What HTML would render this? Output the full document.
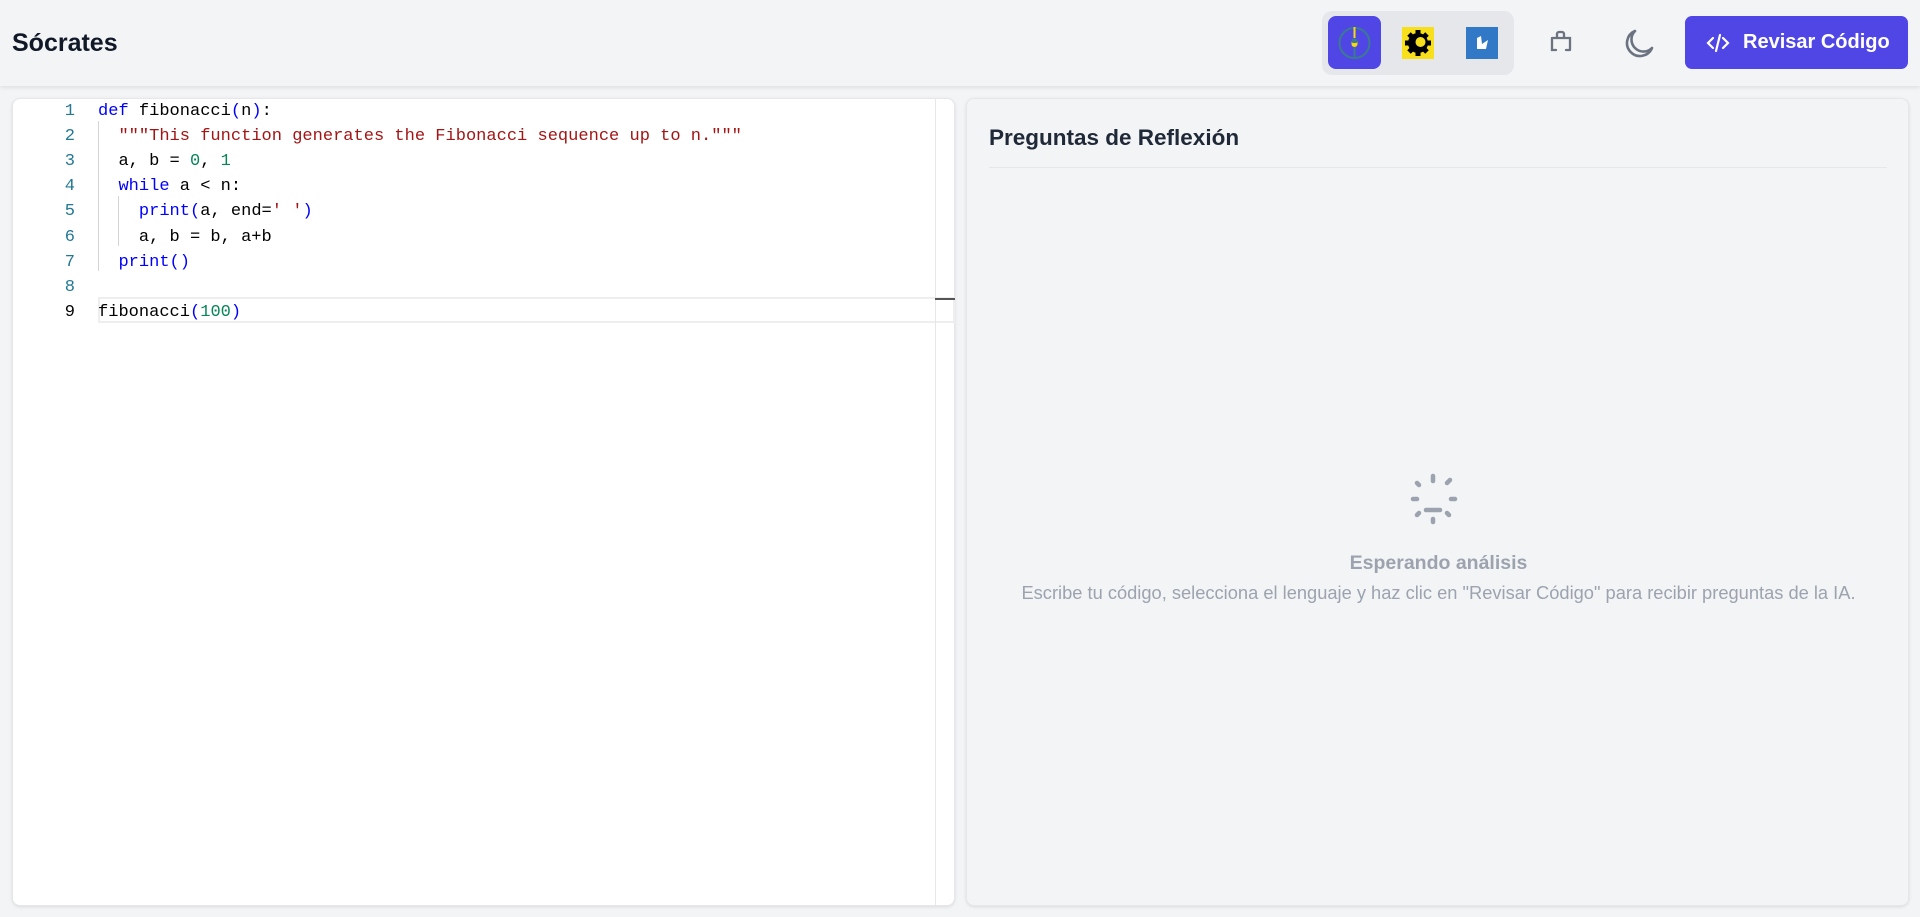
<!DOCTYPE html>
<html><head><meta charset="utf-8"><style>
*{margin:0;padding:0;box-sizing:border-box}
body{width:1920px;height:917px;background:#f3f4f6;font-family:"Liberation Sans",sans-serif;position:relative;overflow:hidden}
.hdr{position:absolute;left:0;top:0;width:1920px;height:86px;background:#f3f4f6;box-shadow:0 2px 4px rgba(0,0,0,.08)}
.title{position:absolute;left:12px;top:29px;font-size:25px;font-weight:bold;color:#111827}
.grp{position:absolute;left:1322px;top:11px;width:192px;height:64px;background:#e5e7eb;border-radius:10px}
.act{position:absolute;left:1328px;top:16px;width:53px;height:53px;background:#4f46e5;border-radius:8px}
.btn{position:absolute;left:1685px;top:16px;width:223px;height:53px;background:#4f46e5;border-radius:7px;color:#fff;font-size:20px;font-weight:bold;line-height:53px;padding-left:58px}
.panel{position:absolute;top:98px;height:808px;border:1px solid #e5e7eb;border-radius:8px;box-shadow:0 1px 3px rgba(0,0,0,.1)}
.ed{left:12px;width:943px;background:#fff}
.rp{left:966px;width:943px;background:#f3f4f6}
.code{position:absolute;left:0;top:0;font-family:"Liberation Mono",monospace;font-size:17.05px}
.code>div{line-height:25px}
.ln{position:absolute;left:0;width:62px;text-align:right;color:#237893}
.cl{position:absolute;left:85px;white-space:pre;color:#000}
.k{color:#0000ff}.s{color:#a31515}.n{color:#098658}
.guide{position:absolute;width:1px;background:#d4d4d4}
</style></head><body>
<div class="hdr">
<div class="title">Sócrates</div>
<div class="grp"></div>
<div class="act"></div>
<svg style="position:absolute;left:1328px;top:16px" width="53" height="53"><circle cx="26.5" cy="27" r="15" fill="none" stroke="#3b7a90" stroke-width="2"/><line x1="26.5" y1="12" x2="26.5" y2="42" stroke="#3b7a90" stroke-width="2"/><line x1="26.5" y1="11" x2="26.5" y2="22" stroke="#f5d90a" stroke-width="2"/><rect x="23.5" y="23" width="6" height="8" rx="3" fill="#f5d90a"/><rect x="23.5" y="23" width="6" height="4" rx="2" fill="#3b7a90"/></svg>
<div style="position:absolute;left:1402px;top:27px;width:32px;height:32px;background:#f8df1c"></div>
<svg style="position:absolute;left:1402px;top:27px" width="32" height="32"><circle cx="16" cy="16" r="10" fill="#000"/><g stroke="#000" stroke-width="5"><line x1="16" y1="3" x2="16" y2="29"/><line x1="3" y1="16" x2="29" y2="16"/><line x1="7" y1="7" x2="25" y2="25"/><line x1="25" y1="7" x2="7" y2="25"/></g><circle cx="18.5" cy="15" r="5" fill="#f8df1c"/></svg>
<div style="position:absolute;left:1466px;top:27px;width:32px;height:32px;background:#3178c6"></div>
<svg style="position:absolute;left:1466px;top:27px" width="32" height="32"><path d="M11 11 L15 9 L16 17 L22 13 L20 22 L11 22 Z" fill="#fff"/></svg>
<svg style="position:absolute;left:1548px;top:28px" width="28" height="28" fill="none" stroke="#6b7280" stroke-width="2.3" stroke-linecap="round"><path d="M4 10 h18 v11 M4 10 v12 h4 M18 22 h4"/><path d="M9 10 V6 a2 2 0 0 1 2-2 h3 a2 2 0 0 1 2 2 v4"/></svg>
<svg style="position:absolute;left:1621px;top:26px" width="36" height="36" fill="none" stroke="#6b7280" stroke-width="2.6" stroke-linejoin="round"><path d="M14 5 A13 13 0 1 0 31 22 A10.5 10.5 0 0 1 14 5 Z"/></svg>
<div class="btn">Revisar Código</div>
<svg style="position:absolute;left:1706px;top:31px" width="24" height="24" fill="none" stroke="#fff" stroke-width="2.2" stroke-linecap="round"><path d="M7 7 L2 12 L7 17 M17 7 L22 12 L17 17 M14 4 L10 20"/></svg>
</div>
<div class="panel ed">
<div class="code">
<div class="ln" style="top:0">1</div><div class="ln" style="top:25px">2</div><div class="ln" style="top:50px">3</div><div class="ln" style="top:75px">4</div><div class="ln" style="top:100px">5</div><div class="ln" style="top:126px">6</div><div class="ln" style="top:151px">7</div><div class="ln" style="top:176px">8</div><div class="ln" style="top:201px;color:#000">9</div>
<div class="guide" style="left:85px;top:22px;height:150px"></div>
<div class="guide" style="left:105px;top:97px;height:50px"></div>
<div style="position:absolute;left:85px;top:198px;width:857px;height:26px;border:2px solid #eee"></div>
<div style="position:absolute;left:922px;top:0;width:1px;height:806px;background:#e5e7eb"></div>
<div style="position:absolute;left:922px;top:199px;width:20px;height:2px;background:#555"></div>
<div class="cl" style="top:0"><span class="k">def</span> fibonacci<span class="k">(</span>n<span class="k">)</span>:</div>
<div class="cl" style="top:25px">  <span class="s">"""This function generates the Fibonacci sequence up to n."""</span></div>
<div class="cl" style="top:50px">  a, b = <span class="n">0</span>, <span class="n">1</span></div>
<div class="cl" style="top:75px">  <span class="k">while</span> a &lt; n:</div>
<div class="cl" style="top:100px">    <span class="k">print(</span>a, end=<span class="s">' '</span><span class="k">)</span></div>
<div class="cl" style="top:126px">    a, b = b, a+b</div>
<div class="cl" style="top:151px">  <span class="k">print()</span></div>
<div class="cl" style="top:201px">fibonacci<span class="k">(</span><span class="n">100</span><span class="k">)</span></div>
</div>
</div>
<div class="panel rp">
<div style="position:absolute;left:22px;top:26px;font-size:22.5px;font-weight:bold;color:#1f2937">Preguntas de Reflexión</div>
<div style="position:absolute;left:22px;top:68px;width:898px;height:1px;background:#e5e7eb"></div>
<svg style="position:absolute;left:436px;top:370px" width="60" height="60" stroke="#9ca3af" stroke-width="4.5" stroke-linecap="round"><line x1="30" y1="7" x2="30" y2="12"/><line x1="44" y1="14" x2="47" y2="11"/><line x1="48" y1="30" x2="52" y2="30"/><line x1="44" y1="44" x2="46" y2="46"/><line x1="30" y1="50" x2="30" y2="53"/><line x1="16" y1="44" x2="14" y2="46"/><line x1="10" y1="30" x2="14" y2="30"/><line x1="16" y1="16" x2="14" y2="14"/><line x1="23" y1="41" x2="37" y2="41"/></svg>
<div style="position:absolute;left:0;width:943px;top:453px;text-align:center;font-size:19.5px;font-weight:bold;color:#9ca3af">Esperando análisis</div>
<div style="position:absolute;left:0;width:943px;top:483px;text-align:center;font-size:18.3px;color:#9ca3af">Escribe tu código, selecciona el lenguaje y haz clic en "Revisar Código" para recibir preguntas de la IA.</div>
</div>
</body></html>
